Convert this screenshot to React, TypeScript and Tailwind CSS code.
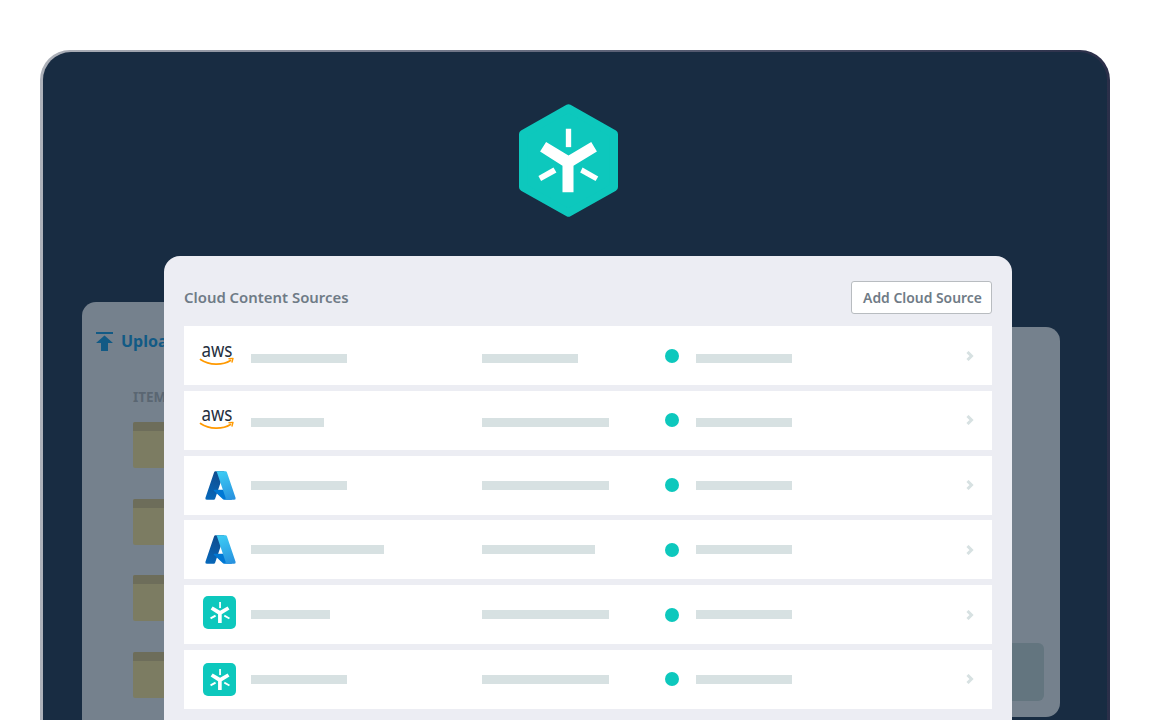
const rows = [
  { logo: 'aws', a: 'w-[96px]', b: 'w-[96px]', low: true },
  { logo: 'aws', a: 'w-[73px]', b: 'w-[127px]', low: true },
  { logo: 'azure', a: 'w-[96px]', b: 'w-[127px]', low: false },
  { logo: 'azure', a: 'w-[133px]', b: 'w-[113px]', low: false },
  { logo: 'egnyte', a: 'w-[79px]', b: 'w-[127px]', low: false },
  { logo: 'egnyte', a: 'w-[96px]', b: 'w-[127px]', low: false },
];

function Glyph() {
  return (
    <>
      <polygon points="168,157 235,197 303,157 320,185 250,228 250,307 217,307 217,228 150,185" fill="#fff" />
      <rect x="227" y="117" width="16" height="55" fill="#fff" />
      <polygon points="145,258 190,233 199,248 153,273" fill="#fff" />
      <polygon points="277,233 324,260 316,273 270,248" fill="#fff" />
    </>
  );
}

function AwsLogo() {
  return (
    <svg width="36" height="36" viewBox="0 0 36 36" className="ml-[15px]">
      <text x="18" y="18.5" textAnchor="middle" fontSize="19" fontWeight="400" fill="#252f3e" fontFamily="'Noto Sans', sans-serif" textLength="31" lengthAdjust="spacingAndGlyphs">
        aws
      </text>
      <path d="M1.5 21.5c9 6 22 6 30 1" fill="none" stroke="#f90" strokeWidth="1.7" strokeLinecap="round" />
      <path d="M30 20.8l4-.4-1 3.6" fill="none" stroke="#f90" strokeWidth="1.4" strokeLinecap="round" strokeLinejoin="round" />
    </svg>
  );
}

function AzureLogo({ id }: { id: number }) {
  return (
    <svg width="33" height="33" viewBox="0 0 96 96" className="ml-[20px]">
      <defs>
        <linearGradient id={`az-a${id}`} x1="46" y1="6" x2="10" y2="90" gradientUnits="userSpaceOnUse">
          <stop offset="0" stopColor="#114a8b" />
          <stop offset="1" stopColor="#0669bc" />
        </linearGradient>
        <linearGradient id={`az-b${id}`} x1="50" y1="8" x2="80" y2="88" gradientUnits="userSpaceOnUse">
          <stop offset="0" stopColor="#3ccbf4" />
          <stop offset="1" stopColor="#2892df" />
        </linearGradient>
      </defs>
      <path d="M33.338 6.544h26.038l-27.03 80.087a4.152 4.152 0 0 1-3.933 2.824H8.149a4.145 4.145 0 0 1-3.928-5.47L29.404 9.368a4.152 4.152 0 0 1 3.934-2.825z" fill={`url(#az-a${id})`} />
      <path d="M71.175 60.261h-41.29a1.911 1.911 0 0 0-1.305 3.309l26.532 24.764a4.171 4.171 0 0 0 2.846 1.121h23.38z" fill="#0078d4" />
      <path d="M66.595 9.364a4.145 4.145 0 0 0-3.928-2.82H33.648a4.146 4.146 0 0 1 3.928 2.82l25.184 74.62a4.146 4.146 0 0 1-3.928 5.472h29.02a4.146 4.146 0 0 0 3.927-5.472z" fill={`url(#az-b${id})`} />
    </svg>
  );
}

function EgnyteTile({ lift }: { lift: boolean }) {
  return (
    <div className={`ml-[19px] flex h-[33px] w-[33px] items-center justify-center rounded-[5px] bg-[#0dc8bd] ${lift ? 'mb-[4px]' : 'mt-[1px]'}`}>
      <svg width="20" height="21" viewBox="145 117 179 190">
        <Glyph />
      </svg>
    </div>
  );
}

function SourceRow({ row, id }: { row: (typeof rows)[number]; id: number }) {
  return (
    <div className="flex h-[59px] items-center bg-white">
      <div className="w-[67px]">
        {row.logo === 'aws' && <AwsLogo />}
        {row.logo === 'azure' && <AzureLogo id={id} />}
        {row.logo === 'egnyte' && <EgnyteTile lift={id === 4} />}
      </div>
      <div className={`w-[231px] ${row.low ? 'pt-[5px]' : ''}`}>
        <div className={`h-[9px] bg-[#d7e1e2] ${row.a}`} />
      </div>
      <div className={`w-[183px] ${row.low ? 'pt-[5px]' : ''}`}>
        <div className={`h-[9px] bg-[#d7e1e2] ${row.b}`} />
      </div>
      <div className="h-[14px] w-[14px] rounded-full bg-[#0dc8bd]" />
      <div className={`ml-[17px] ${row.low ? 'pt-[5px]' : ''}`}>
        <div className="h-[9px] w-[96px] bg-[#d7e1e2]" />
      </div>
      <svg width="8" height="10" viewBox="0 0 8 10" className="ml-[174px]">
        <path d="M1.5 1l4 4-4 4" fill="none" stroke="#d7e1e2" strokeWidth="3" />
      </svg>
    </div>
  );
}

function UploadPanel() {
  return (
    <div className="absolute left-[39px] top-[250px] h-[520px] w-[200px] rounded-t-[14px] bg-[#75818d] pl-[14px] pt-[29px]">
      <div className="flex items-center gap-2">
        <svg width="17" height="19" viewBox="0 0 17 19">
          <rect x="0" y="0" width="17" height="2" fill="#125a85" />
          <path d="M8.5 3.5L17 11h-5v8H5v-8H0z" fill="#125a85" />
        </svg>
        <span className="text-[16px] font-bold leading-5 text-[#125a85]">Upload</span>
      </div>
      <div className="ml-[37px] mt-[38px] text-[13.5px] font-bold leading-4 text-[#5a6672]">ITEMS</div>
      <div className="ml-[37px] mt-[17px] flex flex-col gap-[30.5px]">
        {[0, 1, 2, 3].map((i) => (
          <div key={i} className="h-[46px] w-[60px] overflow-hidden rounded-[2px] bg-[#7c7c62]">
            <div className="h-[9px] bg-[#6d6d5a]" />
          </div>
        ))}
      </div>
    </div>
  );
}

export default function App() {
  return (
    <div className="h-[720px] overflow-hidden bg-white font-['Noto_Sans',sans-serif]">
      <div className="ml-10 mt-[50px] h-[760px] w-[1070px] rounded-[30px] bg-gradient-to-r from-[#adb1b9] via-[#60667a] to-[#2b2f49] pl-[3px] pr-[3px] pt-[2px]">
        <div className="relative flex h-full flex-col items-start overflow-hidden rounded-[28px] bg-[#182c42]">
          <UploadPanel />
          <div className="absolute left-[857px] top-[275px] flex h-[390px] w-[160px] flex-col justify-end rounded-[14px] bg-[#75818d] p-4">
            <div className="h-[58px] rounded-[6px] bg-[#63757f]" />
          </div>

          <svg width="99" height="113" viewBox="87 43 296 338" className="relative ml-[476px] mt-[52px]">
            <polygon points="235,56 371,133 371,292 235,368 99,292 99,133" fill="#0dc8bd" stroke="#0dc8bd" strokeWidth="24" strokeLinejoin="round" />
            <Glyph />
          </svg>

          <div className="relative ml-[121px] mt-[39px] w-[848px] rounded-[16px] bg-[#ecedf3] px-5 pb-10 pt-[25px]">
            <div className="mb-3 flex h-[33px] items-center justify-between">
              <h2 className="text-[14.9px] font-semibold text-[#6f7b86]">Cloud Content Sources</h2>
              <button className="h-[33px] w-[141px] rounded-[3px] border-[1.5px] border-[#b8bcc0] bg-white pl-[2px] pt-[1px] text-[13.9px] font-semibold text-[#6f7b86]">
                Add Cloud Source
              </button>
            </div>
            <div className="flex flex-col gap-[5.8px]">
              {rows.map((row, i) => (
                <SourceRow key={i} row={row} id={i} />
              ))}
            </div>
          </div>
        </div>
      </div>
    </div>
  );
}
